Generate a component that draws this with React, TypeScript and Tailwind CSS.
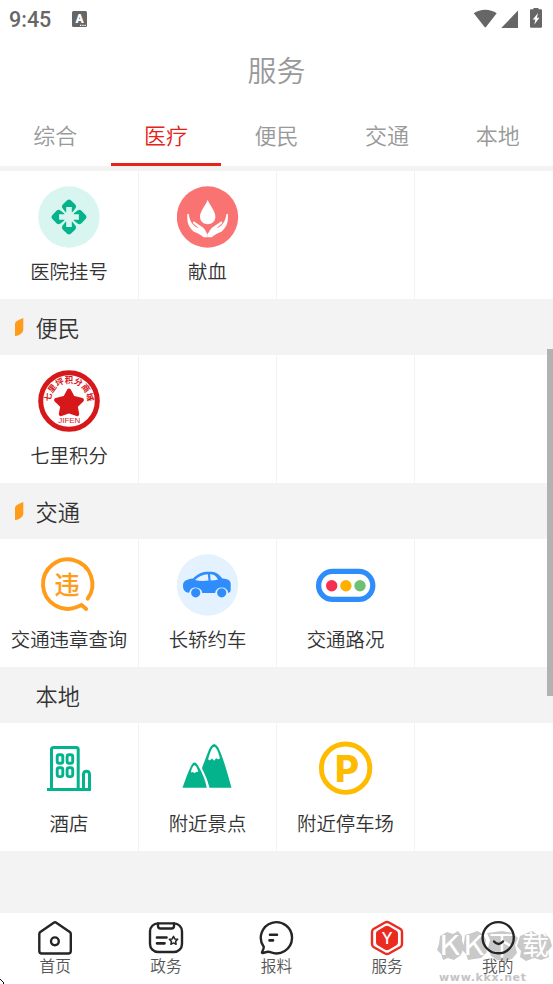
import type { ReactNode } from "react";

const tabs = ["综合", "医疗", "便民", "交通", "本地"];

function StatusBar() {
  return (
    <div className="flex h-[37px] items-center pl-[9px] text-[#666]">
      <span className="w-[63px] pt-0.5 font-[Roboto] text-[21.5px] leading-none font-medium">9:45</span>
      <svg width="15" height="16" viewBox="0 0 15 16">
        <rect width="15" height="16" rx="1.500" fill="#666" />
        <text x="7.500" y="12" textAnchor="middle" fontFamily="Roboto" fontWeight="900" fontSize="12" fill="#fff">
          A
        </text>
        <path d="M8 14.300h1.300M10.300 14.300h1.300M12.500 14.300h1.300" stroke="#fff" strokeWidth="1.200" />
      </svg>
      <svg className="mr-[9px] ml-auto" width="71" height="22" viewBox="0 0 71 22" fill="#666">
        <path d="M0.800 5.300C7 .6 17.500 .6 23.700 5.300L13.200 18.700Q12.300 19.700 11.400 18.700Z" />
        <path d="M45 2.600V20H28.200Z" />
        <path d="M60.500 1.300V0h5v1.300h2.500q1 0 1 1V18.700q0 1-1 1h-10q-1 0-1-1V2.300q0-1 1-1Z" />
        <path d="M65 5L59.800 11.400h2.500l-.9 5.200 5-6.900h-2.500Z" fill="#fff" />
      </svg>
    </div>
  );
}

function HospitalIcon() {
  return (
    <>
      <circle cx="31" cy="31" r="30.700" fill="#d8f6ef" />
      {[0, 90, 180, 270].map((angle) => (
        <path
          key={angle}
          transform={`rotate(${angle} 31 31)`}
          d="M29.200 14.200q1.800-1.500 3.600 0l4.500 4.300q1.500 1.800 .4 3.600l-3.300 4.200h-.6v-5.200h-5.600v5.200h-.6l-3.300-4.200q-1.100-1.800 .4-3.600Z"
          fill="#04b38b"
        />
      ))}
    </>
  );
}

function BloodIcon() {
  return (
    <>
      <circle cx="30.500" cy="31" r="30.700" fill="#f97373" />
      <g fill="#fff">
        <path d="M30.700 13.800C29.500 18.500 23 24.500 23 31a7.700 7.300 0 0 0 15.400 0C38.400 24.500 32 18.500 30.700 13.800Z" />
        <path d="M10.300 28.300C9.700 38 12.500 41.500 16.500 45.500C20.500 47.200 23.500 48.800 26.500 51.200H30.300V48.200C29.100 46.500 28.700 43.800 26.300 41.700L17.500 35.800C15.800 35 15.600 36.700 16.500 37.700L22 42.300C16.500 40.800 12.800 36 11.900 28.600C11.600 27.600 10.500 27.600 10.300 28.300Z" />
        <path d="M50.900 28.300C51.500 38 48.700 41.500 44.700 45.500C40.700 47.200 37.700 48.800 34.700 51.200H30.300V48.200C32.100 46.500 32.500 43.800 34.900 41.700L43.700 35.800C45.400 35 45.600 36.700 44.700 37.700L39.200 42.300C44.700 40.800 48.400 36 49.300 28.600C49.600 27.600 50.700 27.600 50.900 28.300Z" />
      </g>
    </>
  );
}

function StampIcon() {
  return (
    <>
      <circle cx="31" cy="31" r="28.300" fill="#fff" stroke="#d7181b" strokeWidth="5" />
      <path
        d="M31 20.500l3.900 7.200 9 2.300-6.200 6.200 1.500 8-8.200-2.900-8.200 2.900 1.500-8-6.200-6.200 9-2.300Z"
        fill="#d7181b"
        stroke="#d7181b"
        strokeWidth="4"
        strokeLinejoin="round"
      />
      <path id="stamp-arc" d="M13.800 37.500a18.300 18.300 0 1 1 34.400 0" fill="none" />
      <text fontSize="8.300" fontWeight="700" fill="#d7181b">
        <textPath href="#stamp-arc" startOffset="50%" textAnchor="middle">
          七里坪积分商城
        </textPath>
      </text>
      <text x="31.300" y="53" textAnchor="middle" fontFamily="Liberation Sans" fontSize="8" fontWeight="400" fill="#d7181b">
        JIFEN
      </text>
    </>
  );
}

function ViolationIcon() {
  return (
    <>
      <path
        d="M49.700 44.600A24.700 24.700 0 1 0 39.500 52.800Q42 51.700 43.500 51L48.200 55"
        fill="none"
        stroke="#ff9c1a"
        strokeWidth="3.900"
        strokeLinecap="round"
      />
      <text x="29" y="40" textAnchor="middle" fontSize="25" fontWeight="500" fill="#ff9c1a" stroke="#ff9c1a" strokeWidth=".2">
        违
      </text>
    </>
  );
}

function CarIcon() {
  return (
    <>
      <circle cx="30.500" cy="31" r="30.700" fill="#e4f1ff" />
      <path
        d="M6 31.500C6 27 9.500 25.300 16 24.500C21 19.500 25 17.700 32 17.700C38.500 17.700 41.500 19.500 45.500 24.600C51 25 53.700 26.500 53.700 30V36Q53.700 38.500 51.300 39.100A6.700 6.700 0 0 0 38.100 39.100H25.300A6.700 6.700 0 0 0 12.100 38.800C8 38.300 6 36.500 6 31.500Z"
        fill="#2f8dfb"
      />
      <path d="M18 26Q23 20.600 30.800 20.200L31.500 26.600Q24 27.400 18 26ZM33 20.300Q38.500 20.300 41 25.500Q38 26.500 33.700 26.500Z" fill="#e4f1ff" />
      <circle cx="18.700" cy="38.800" r="4.600" fill="#2f8dfb" />
      <circle cx="44.700" cy="38.800" r="4.600" fill="#2f8dfb" />
    </>
  );
}

function TrafficIcon() {
  return (
    <>
      <rect x="3.600" y="17.400" width="54.200" height="28" rx="14" fill="#fff" stroke="#2f8dfb" strokeWidth="5.300" />
      <circle cx="16.700" cy="31.700" r="5.700" fill="#f5304f" />
      <circle cx="30.900" cy="31.700" r="5.700" fill="#ffaf00" />
      <circle cx="45" cy="31.700" r="5.700" fill="#6fc070" />
    </>
  );
}

function HotelIcon() {
  return (
    <g fill="none" stroke="#04b38b" strokeWidth="3">
      <path d="M13.500 51V11.500q0-2 2-2h22.700q2 0 2 2V51M45.500 51V36.500q0-3.300 3-3.300t3 3.300V51" />
      <path d="M9 51.500H53" />
      <g strokeWidth="2.900">
        <rect x="19.200" y="16.700" width="5.600" height="8.600" rx="2" />
        <rect x="29.100" y="16.700" width="5.600" height="8.600" rx="2" />
        <rect x="19.200" y="29.800" width="5.600" height="8.800" rx="2" />
        <rect x="29.100" y="29.800" width="5.600" height="8.800" rx="2" />
      </g>
    </g>
  );
}

function MountainIcon() {
  return (
    <g transform="translate(-.5 0)">
      <g fill="#04b38b">
        <path d="M25.800 29C29 21 31.500 13.500 33.500 9.500Q37.600 2.500 41.800 9.500C47 20 51 36 55 49.700H33Q31 41 26.500 32.500Q25.300 31 25.800 29Z" />
        <path d="M6 49.700C8.500 42.500 11.500 34.500 14.500 28Q17.900 21.500 21.500 27.500Q28.500 39.500 30.300 49.700Z" />
      </g>
      <g fill="#fff">
        <path d="M31.800 20.500Q35 9 37.700 8.800Q40.300 9 43.300 19.500Q43.500 21.500 41.600 21.200L39.600 20.200 37.700 22.800 35.500 20.400 33.500 22.200Q31.300 22.500 31.800 20.500Z" />
        <path d="M14.500 33.500Q16 27.500 18 27.300Q19.800 27.500 21.700 33.300Q21.500 34.500 19.900 33.700L18 35.200 16.500 34Q14.700 35 14.500 33.500Z" />
      </g>
    </g>
  );
}

function ParkingIcon() {
  return (
    <>
      <circle cx="30.600" cy="30.200" r="24.200" fill="none" stroke="#ffbb00" strokeWidth="4.900" />
      <text x="32" y="43.900" textAnchor="middle" fontFamily="Inter" fontWeight="800" fontSize="37" fill="#ffbb00">
        P
      </text>
    </>
  );
}

interface Service {
  name: string;
  icon: ReactNode;
}

interface Section {
  title?: string;
  marked?: boolean;
  services: Service[];
}

const sections: Section[] = [
  {
    services: [
      { name: "医院挂号", icon: <HospitalIcon /> },
      { name: "献血", icon: <BloodIcon /> },
    ],
  },
  { title: "便民", marked: true, services: [{ name: "七里积分", icon: <StampIcon /> }] },
  {
    title: "交通",
    marked: true,
    services: [
      { name: "交通违章查询", icon: <ViolationIcon /> },
      { name: "长轿约车", icon: <CarIcon /> },
      { name: "交通路况", icon: <TrafficIcon /> },
    ],
  },
  {
    title: "本地",
    services: [
      { name: "酒店", icon: <HotelIcon /> },
      { name: "附近景点", icon: <MountainIcon /> },
      { name: "附近停车场", icon: <ParkingIcon /> },
    ],
  },
];

function ServiceSection({ title, marked, services }: Section) {
  return (
    <section>
      {title && (
        <h2 className="flex h-14 items-center pl-[14px] text-[22.2px] leading-8 font-[350] text-[#333]">
          <span className="flex w-[21.5px]">
            {marked && (
              <svg width="10" height="18" viewBox="0 0 10 18">
                <path d="M1 6Q1 4.300 2.500 3.300Q5.500 1.200 9.300 0V11.500Q9.300 13.500 8 14.800Q5.500 17.800 1 18Z" fill="#ff9c1a" />
              </svg>
            )}
          </span>
          {title}
        </h2>
      )}
      <div className="grid h-32 grid-cols-[139px_138px_138px_138px] bg-white">
        {[0, 1, 2, 3].map((i) => (
          <div key={i} className="flex flex-col items-center border-r border-[#f3f3f3] pt-[15px] last:border-r-0">
            {services[i] && (
              <>
                <svg width="62" height="62" viewBox="0 0 62 62">
                  {services[i].icon}
                </svg>
                <span className="mt-[9px] text-[19.4px] leading-7 font-[350] whitespace-nowrap text-[#333]">
                  {services[i].name}
                </span>
              </>
            )}
          </div>
        ))}
      </div>
    </section>
  );
}

const navItems: Service[] = [
  {
    name: "首页",
    icon: (
      <>
        <path d="M16.700 2.700q1.300-1 2.600 0L32.800 12q1 .8 1 2V31q0 2.500-2.500 2.500H4.800Q2.300 33.500 2.300 31V14q0-1.200 1-2Z" />
        <circle cx="17.900" cy="21.300" r="3.900" />
      </>
    ),
  },
  {
    name: "政务",
    icon: (
      <>
        <rect x="2" y="3.400" width="32" height="28.600" rx="8" />
        <path d="M10 3.500V6q0 2.500 2.500 2.500h11Q26 8.500 26 6V3.500" />
        <path d="M9 17.500h9.500M9 23.300h7.500" strokeWidth="2.700" />
        <path d="M25.500 16.300l1.300 2.600 2.900.4-2.100 2.100.5 2.900-2.600-1.400-2.600 1.400.5-2.900-2.100-2.100 2.900-.4Z" strokeWidth="1.500" />
      </>
    ),
  },
  {
    name: "报料",
    icon: (
      <>
        <path d="M5.700 26.800A15.600 15.600 0 1 1 12.500 32.200Q10.500 31.300 8.500 32L4.700 33Q3.600 33 4.300 31.500Q6 28.500 5.700 26.800Z" />
        <path d="M12 14.700h7M11.500 20.400h3.500" strokeWidth="2.600" />
      </>
    ),
  },
  {
    name: "服务",
    icon: (
      <>
        <path d="M16 2.500q2-1 4 0L31.500 9q1.500 1 1.500 3V24q0 2-1.500 3L20 33.500q-2 1-4 0L4.500 27Q3 26 3 24V12q0-2 1.500-3Z" stroke="#eb2a20" />
        <path d="M16.500 7q1.500-.8 3 0L27 11.300q1.200.7 1.200 2V22.500q0 1.400-1.200 2.200L19.500 29q-1.500.8-3 0L9 24.700Q7.800 24 7.800 22.500V13.300q0-1.300 1.200-2Z" fill="#eb2a20" stroke="#eb2a20" strokeWidth="1.500" />
        <text x="18" y="24.400" textAnchor="middle" fontFamily="Inter" fontWeight="500" fontSize="16" fill="#fff" stroke="none">
          Y
        </text>
      </>
    ),
  },
  {
    name: "我的",
    icon: (
      <>
        <circle cx="18.200" cy="17.700" r="15.600" />
        <path d="M14 21.500q4.500 5 9 0" />
      </>
    ),
  },
];

function Watermark() {
  return (
    <svg className="absolute right-0 bottom-0" width="118" height="66" viewBox="0 -10 118 66">
      <g fill="#c9c9c9">
        <path d="M5 8L12 4 18 6 23 3 27 8 27 13 29 18 26 27 19 32 13 30 8 32 6 26 2 22 4 16Z" />
        <path d="M30 7L37 5 42 3 48 6 51 12 50 19 52 24 46 30 39 31 33 32 31 26 27 22 29 15Z" />
        <path d="M52 5L60 4 67 3 78 5 83 10 80 17 82 25 77 31 69 33 62 32 56 28 53 20 55 12Z" />
        <path d="M85 8L92 5 97 3 103 7 110 5 115 11 117 18 113 23 114 29 106 32 99 30 91 33 85 29 86 23 82 18Z" />
      </g>
      <g fill="#fff" fontSize="27">
        <text x="4" y="27" textLength="21" lengthAdjust="spacingAndGlyphs">
          K
        </text>
        <text x="28" y="27" textLength="21" lengthAdjust="spacingAndGlyphs">
          K
        </text>
        <text x="54" y="27">下</text>
        <text x="87" y="27">载</text>
      </g>
      <text x="4" y="53" fontFamily="DejaVu Sans" fontWeight="700" fontSize="11" textLength="87" fill="#c4c4c4">
        www.kkx.net
      </text>
    </svg>
  );
}

function BottomNav() {
  return (
    <nav className="relative grid h-[71px] grid-cols-5 bg-white">
      <Watermark />
      {navItems.map((item) => (
        <div key={item.name} className="relative flex flex-col items-center pt-[7px]">
          <svg
            width="36"
            height="36"
            viewBox="0 0 36 36"
            fill="none"
            stroke="#252525"
            strokeWidth="2.400"
            strokeLinecap="round"
            strokeLinejoin="round"
          >
            {item.icon}
          </svg>
          <span className="text-[15.7px] leading-5 font-[350] text-[#555]">{item.name}</span>
        </div>
      ))}
      <svg className="absolute bottom-0 left-0" width="5" height="5" viewBox="0 0 5 5">
        <path d="M0 .5h1M1 1.500h1M2 2.500h1M3 3.500h1M3 4.500h1" stroke="#111" />
      </svg>
    </nav>
  );
}

export default function App() {
  return (
    <div className="relative flex h-[984px] w-[553px] flex-col overflow-hidden bg-[#f3f3f3] font-['Noto_Sans_CJK_SC',sans-serif]">
      <header className="h-[166px] bg-white">
        <StatusBar />
        <h1 className="flex h-[68px] items-center justify-center pb-0.5 text-[29px] font-[350] text-[#999]">服务</h1>
        <div className="grid h-[61px] grid-cols-5 text-[22px] font-[350]">
          {tabs.map((tab) => (
            <div
              key={tab}
              className={
                tab === "医疗"
                  ? "flex items-center justify-center border-b-3 border-[#e6231a] text-[#e6231a]"
                  : "flex items-center justify-center border-b-3 border-transparent text-[#999]"
              }
            >
              {tab}
            </div>
          ))}
        </div>
      </header>
      <main className="flex-1 pt-[5px]">
        {sections.map((section, i) => (
          <ServiceSection key={i} {...section} />
        ))}
      </main>
      <BottomNav />
      {/* scroll position indicator */}
      <div className="absolute top-[349px] right-0 h-[347px] w-1.5 bg-[#b2b2b2]" />
    </div>
  );
}
